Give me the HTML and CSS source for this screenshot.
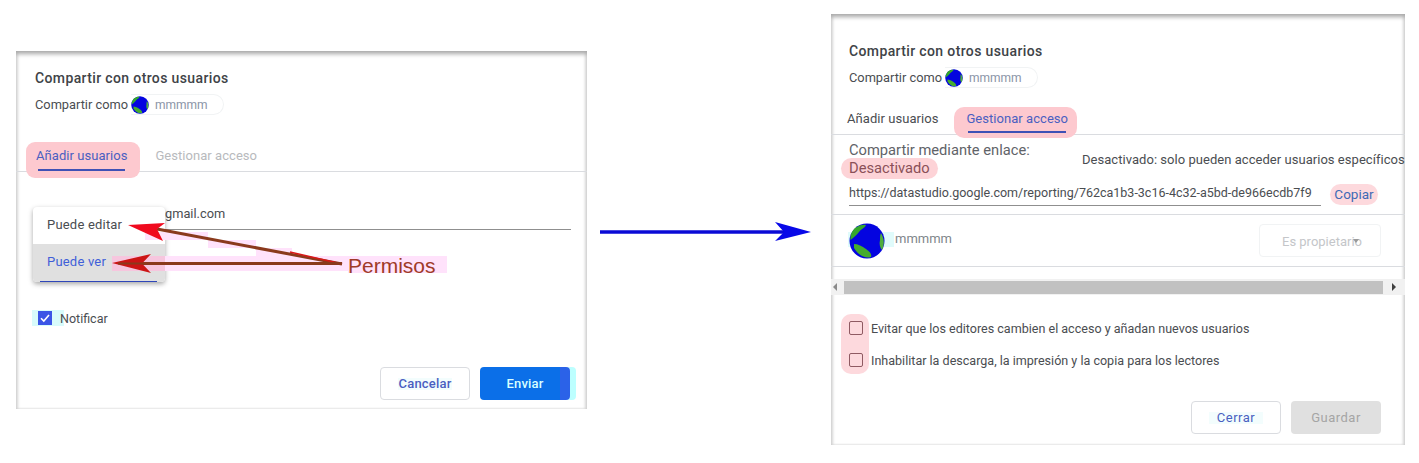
FILE: index.html
```html
<!DOCTYPE html>
<html lang="es">
<head>
  <meta charset="UTF-8" />
  <meta name="viewport" content="width=device-width, initial-scale=1.0"/>
  <title>Compartir con otros usuarios</title>
  <link rel="stylesheet" href="styles.css">
</head>
<body>
  <svg class="defs" width="0" height="0">
    <symbol id="globe" viewBox="0 0 36 36">
      <circle cx="18" cy="18" r="17.5" fill="#0404e0"/>
      <path d="M6 5 C10 2 15 1 17 2 C16 5 12 6 10 9 C8 12 5 14 1.500 17 C1 12 3 8 6 5Z" fill="#35a82c"/>
      <path d="M5 21 C9 21 13 23 17 26 C21 29 23 31 22 34 C16 36 9 32 5 25Z" fill="#45ac2e"/>
      <path d="M32 10 C35 15 36 21 33 27 C31 25 30 21 31 17 C31 14 31 12 32 10Z" fill="#4fae3c"/>
    </symbol>
  </svg>

  <div class="dialog dialog-add">
    <div class="head">
      <div class="title">Compartir con otros usuarios</div>
      <div class="owner">
        <span>Compartir como</span>
        <span class="chip"><svg class="chip-avatar"><use href="#globe"/></svg><span class="chip-name">mmmmm</span></span>
      </div>
    </div>
    <div class="tabs tabs-add">
      <div class="tab tab-on tab-mark">Añadir usuarios</div>
      <div class="tab tab-off">Gestionar acceso</div>
    </div>
    <div class="add-body">
      <div class="mail">gmail.com</div>
      <div class="notify">
        <span class="notify-box">
          <svg width="14" height="14" viewBox="0 0 14 14"><path d="M3 7.200 L5.800 10 L11 4" fill="none" stroke="#fff" stroke-width="1.600"/></svg>
        </span>
        <span>Notificar</span>
      </div>
      <div class="actions">
        <button class="btn btn-line">Cancelar</button>
        <button class="btn btn-blue">Enviar</button>
      </div>
    </div>
    <div class="menu">
      <div class="menu-item">Puede editar</div>
      <div class="menu-item menu-item-on">Puede ver</div>
    </div>
  </div>

  <svg class="big-arrow" width="212" height="20" viewBox="0 0 212 20">
    <path d="M0 8.200 H184 V11.800 H0Z" fill="#0a0ad6"/>
    <path d="M211 10 L175 0 L184 10 L175 19Z" fill="#0808e8"/>
  </svg>

  <div class="dialog dialog-access">
    <div class="head head-access">
      <div class="title">Compartir con otros usuarios</div>
      <div class="owner">
        <span>Compartir como</span>
        <span class="chip"><svg class="chip-avatar"><use href="#globe"/></svg><span class="chip-name">mmmmm</span></span>
      </div>
    </div>
    <div class="tabs tabs-access">
      <div class="tab tab-plain">Añadir usuarios</div>
      <div class="tab tab-on tab-mark tab-mark-access">Gestionar acceso</div>
    </div>
    <div class="link-block">
      <div class="link-state">
        <div class="link-label">Compartir mediante enlace:</div>
        <div class="link-off">Desactivado</div>
      </div>
      <div class="link-note">Desactivado: solo pueden acceder usuarios específicos</div>
    </div>
    <div class="url-row">
      <div class="url">https://datastudio.google.com/reporting/762ca1b3-3c16-4c32-a5bd-de966ecdb7f9</div>
      <div class="copy">Copiar</div>
    </div>
    <div class="person">
      <svg class="person-avatar"><use href="#globe"/></svg>
      <span class="person-name">mmmmm</span>
      <div class="role">Es propietario<span class="role-caret"></span></div>
    </div>
    <div class="scroll">
      <span class="scroll-left"></span>
      <span class="scroll-thumb"></span>
      <span class="scroll-right"></span>
    </div>
    <div class="options">
      <div class="option"><span class="box"></span>Evitar que los editores cambien el acceso y añadan nuevos usuarios</div>
      <div class="option"><span class="box"></span>Inhabilitar la descarga, la impresión y la copia para los lectores</div>
    </div>
    <div class="actions actions-access">
      <button class="btn btn-line">Cerrar</button>
      <button class="btn btn-grey">Guardar</button>
    </div>
  </div>

  <!-- flechas y texto de anotacion sobre el primer dialogo -->
  <svg class="marks" width="460" height="80" viewBox="100 210 460 80">
    <g fill="#ffe2fb">
      <rect x="145" y="232" width="63" height="8"/>
      <rect x="208" y="240" width="48" height="8"/>
      <rect x="256" y="248" width="36" height="8"/>
      <rect x="165" y="256" width="183" height="15"/>
    </g>
    <rect x="112" y="256" width="53" height="15" fill="#f6c6de"/>
    <path d="M157 229 L342 264" stroke="#8a3a1c" stroke-width="3"/>
    <path d="M290 252 L342 264" stroke="#d81818" stroke-width="1.500"/>
    <path d="M128 225 L165 223 L157 229 L163 241Z" fill="#f00a1e"/>
    <path d="M142 263.500 H342" stroke="#8a3a1c" stroke-width="3"/>
    <path d="M112 263 L151 254 L142 263.500 L151 273Z" fill="#cc1515"/>
    <path d="M118 263.500 H146" stroke="#8a3a1c" stroke-width="2"/>
  </svg>
  <div class="permisos">Permisos</div>
</body>
</html>
```
FILE: styles.css
```css
* {
  box-sizing: border-box;
}
html, body {
  margin: 0;
  height: 463px;
  overflow: hidden;
}
body {
  display: flex;
  align-items: flex-start;
  position: relative;
  background-color: #fff;
  font-family: Roboto, "Liberation Sans", sans-serif;
  font-size: 13px;
  color: #4a4d51;
}
.defs {
  position: absolute;
}
.dialog {
  position: relative;
  flex: none;
  background-color: #fff;
  box-shadow: inset 0 5px 4px -2px #a8a8a8, inset 3px 0 3px -1px #d8d8d8, inset -3px 0 3px -1px #d8d8d8, inset 0 -2px 2px -1px #eee;
}
.dialog-add {
  width: 571px;
  height: 358px;
  margin: 51px 0 0 16px;
}
.dialog-access {
  width: 574px;
  height: 431px;
  margin: 14px 0 0 19px;
  overflow: hidden;
}
.head {
  padding: 19px 0 0 19px;
  height: 91px;
}
.head-access {
  height: 92px;
  padding: 29px 0 0 18px;
}
.title {
  font-size: 14px;
  font-weight: 500;
  line-height: 17px;
  letter-spacing: 0.37px;
  color: #404347;
}
.owner {
  display: flex;
  align-items: center;
  margin-top: 7px;
  height: 21px;
  font-size: 12.800px;
}
.chip {
  display: flex;
  align-items: center;
  height: 21px;
  margin-left: 3px;
  width: 93px;
  border: 1px solid #f1f3f4;
  border-left: none;
  border-radius: 0 11px 11px 0;
}
.chip-avatar {
  width: 18px;
  height: 18px;
}
.chip-name {
  margin-left: 6px;
  font-size: 12px;
  color: #8a94a6;
}
.tabs {
  display: flex;
  position: relative;
  border-bottom: 1px solid #dadce0;
  font-size: 13px;
  letter-spacing: 0.05px;
}
.tabs-add {
  height: 30px;
  padding-left: 10px;
}
.tabs-access {
  height: 29px;
  padding-left: 16px;
}
.tab {
  white-space: nowrap;
}
.tab-on {
  color: #4a5fc1;
}
.tab-off {
  color: #b8babd;
  margin: 6px 0 0 15px;
}
.tab-plain {
  margin-top: 5px;
}
.tab-mark {
  position: relative;
  height: 36px;
  padding: 6px 13px 0 10px;
  background-color: #fdc9cf;
  border-radius: 9px;
  z-index: 1;
}
.tab-mark::after {
  content: "";
  position: absolute;
  left: 12px;
  right: 15px;
  top: 27px;
  height: 2px;
  background-color: #3f51b5;
}
.tab-mark-access {
  height: 31px;
  margin: 1px 0 0 16px;
  padding: 4px 9px 0 12px;
  border-radius: 10px;
}
.tab-mark-access::after {
  left: 14px;
  right: 11px;
  top: 24px;
}
.add-body {
  position: relative;
  padding-top: 34px;
}
.mail {
  height: 24px;
  margin: 0 16px 0 149px;
  border-bottom: 1px solid #8f8f8f;
  font-size: 12.800px;
  line-height: 15px;
}
.notify {
  display: flex;
  align-items: center;
  gap: 8px;
  margin: 80px 0 0 16px;
  height: 16px;
  padding-left: 6px;
  font-size: 12.500px;
  background: linear-gradient(to right, #d8fbfb 32px, transparent 32px);
}
.notify-box {
  display: flex;
  width: 14px;
  height: 14px;
  background-color: #3b55e6;
}
.actions {
  display: flex;
  justify-content: flex-end;
  gap: 10px;
  margin: 41px 17px 0 0;
  position: relative;
}
.btn {
  width: 90px;
  height: 33px;
  padding: 0;
  border: none;
  border-radius: 4px;
  font-family: Roboto, "Liberation Sans", sans-serif;
  font-size: 13px;
  font-weight: 500;
  letter-spacing: 0.2px;
}
.btn-line {
  background: #fff linear-gradient(#f3fdfd, #f3fdfd) no-repeat center / 54px 12px;
  border: 1px solid #dadce0;
  color: #4a5fc1;
}
.btn-blue {
  background: linear-gradient(to right, #0b6fe8 80px, #2b62e8 80px);
  color: #d8ffff;
  box-shadow: 6px 0 0 #bdffff;
}
.btn-grey {
  background-color: #e0e0e0;
  color: #a5a5a5;
}
.menu {
  position: absolute;
  left: 17px;
  top: 156px;
  width: 132px;
  background-color: #fff;
  border-radius: 4px;
  box-shadow: 0 2px 5px rgba(0, 0, 0, 0.35);
  overflow: hidden;
}
.menu::after {
  content: "";
  position: absolute;
  left: 7px;
  right: 8px;
  bottom: 0;
  height: 1px;
  background-color: #2f46b8;
}
.menu-item {
  height: 37px;
  padding: 10px 0 0 14px;
  letter-spacing: 0.2px;
}
.menu-item-on {
  height: 38px;
  background-color: #e0e0e0;
  color: #3f5fd8;
}
.big-arrow {
  flex: none;
  margin: 222px 0 0 13px;
}
.link-block {
  display: flex;
  height: 47px;
  padding-left: 18px;
}
.link-state {
  width: 233px;
  flex: none;
}
.link-label {
  font-size: 14.700px;
  line-height: 18px;
  margin-top: 6px;
  color: #5f6368;
  white-space: nowrap;
}
.link-off {
  width: 97px;
  height: 21px;
  margin: -1px 0 0 -8px;
  padding-left: 8px;
  background-color: #fdd3d7;
  border-radius: 11px;
  font-size: 14.700px;
  line-height: 21px;
  color: #8a5058;
}
.link-note {
  margin-top: 17px;
  white-space: nowrap;
  letter-spacing: 0.04px;
}
.url-row {
  display: flex;
  height: 33px;
  padding-left: 18px;
  border-bottom: 1px solid #dadce0;
}
.url {
  width: 472px;
  height: 24px;
  padding-top: 3px;
  border-bottom: 1px solid #8f8f8f;
  white-space: nowrap;
  font-size: 12.500px;
}
.copy {
  width: 48px;
  height: 21px;
  margin: 2px 0 0 9px;
  background-color: #fdd9dd;
  border-radius: 11px;
  text-align: center;
  font-size: 13.500px;
  line-height: 21px;
  color: #3f6ab5;
}
.person {
  position: relative;
  display: flex;
  align-items: center;
  height: 52px;
  padding: 0 24px 0 18px;
  border-bottom: 1px solid #dadce0;
}
.person::before {
  content: "";
  position: absolute;
  left: 17px;
  top: 17px;
  width: 46px;
  height: 15px;
  background-color: #e0fbfb;
}
.person-avatar {
  position: relative;
  width: 36px;
  height: 36px;
}
.person-name {
  position: relative;
  margin: 0 0 5px 10px;
  color: #80868b;
}
.role {
  position: relative;
  width: 122px;
  height: 33px;
  margin-left: auto;
  padding: 9px 0 0 22px;
  border: 1px solid #f1f3f4;
  border-radius: 4px;
  color: #c4c6c9;
  white-space: nowrap;
}
.role-caret {
  position: absolute;
  left: 93px;
  top: 14px;
  border: 3px solid transparent;
  border-top: 4px solid #9a9a9a;
}
.scroll {
  display: flex;
  align-items: center;
  height: 16px;
  margin-top: 12px;
  background-color: #f1f1f1;
}
.scroll-left {
  width: 0;
  margin: 0 7px 0 2px;
  border: 4px solid transparent;
  border-left: none;
  border-right: 4px solid #8a8a8a;
}
.scroll-thumb {
  width: 539px;
  height: 13px;
  background-color: #c1c1c1;
}
.scroll-right {
  width: 0;
  margin-left: 9px;
  border: 4px solid transparent;
  border-right: none;
  border-left: 4px solid #404040;
}
.options {
  position: relative;
  display: flex;
  flex-direction: column;
  gap: 18px;
  margin-top: 26px;
  padding-left: 18px;
}
.options::before {
  content: "";
  position: absolute;
  left: 10px;
  top: -7px;
  width: 28px;
  height: 60px;
  background-color: #fdd9dd;
  border-radius: 10px;
}
.option {
  position: relative;
  display: flex;
  align-items: center;
  gap: 8px;
  height: 14px;
  white-space: nowrap;
  font-size: 12.550px;
}
.box {
  width: 14px;
  height: 14px;
  border: 1px solid #8f5a62;
  border-radius: 2px;
}
.actions-access {
  margin: 34px 24px 0 0;
}
.actions-access .btn {
  font-weight: 400;
  letter-spacing: 0.5px;
}
.marks {
  position: absolute;
  left: 100px;
  top: 210px;
  pointer-events: none;
}
.permisos {
  position: absolute;
  left: 348px;
  top: 254px;
  padding-right: 11px;
  background: linear-gradient(#ffe2fb, #ffe2fb) no-repeat 0 2px / 100% 17px;
  font-family: "Liberation Sans", sans-serif;
  font-size: 21px;
  line-height: 24px;
  color: #a03a28;
}
```
